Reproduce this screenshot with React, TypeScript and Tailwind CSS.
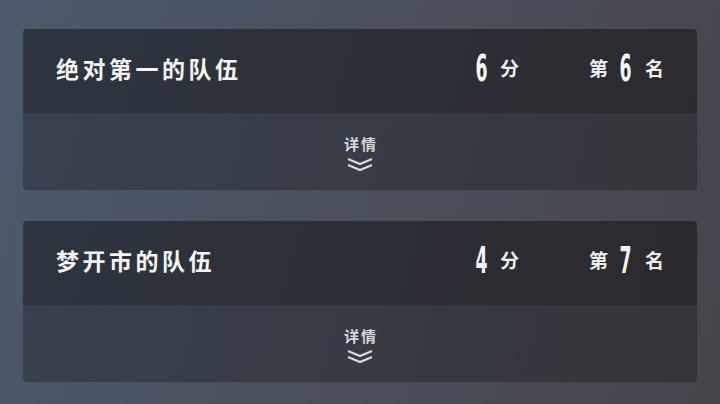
import React from "react";

const cjk = { fontFamily: '"Noto Sans CJK SC", "Noto Sans", sans-serif' };
const num = { fontFamily: '"Liberation Sans Narrow", "DejaVu Sans Condensed", "Liberation Sans", sans-serif' };

function Digit({ v }: { v: string }) {
  return (
    <span className="inline-flex w-[11px] justify-center overflow-visible">
      <span
        className="inline-block scale-x-[0.52] text-[37px] font-bold leading-none text-[#f4f4f4]"
        style={num}
      >
        {v}
      </span>
    </span>
  );
}

function Chevrons() {
  return (
    <svg width="28" height="16" viewBox="0 0 28 16" fill="none">
      <path d="M2 2 L14 7 L26 2" stroke="#d9d9d9" strokeWidth="2.4" strokeLinejoin="miter" />
      <path d="M2 8 L14 13 L26 8" stroke="#d9d9d9" strokeWidth="2.4" strokeLinejoin="miter" />
    </svg>
  );
}

function Card({ name, score, rank }: { name: string; score: string; rank: string }) {
  return (
    <div className="overflow-hidden rounded-[4px]">
      <div className="flex h-[84px] items-center bg-black/40 pb-[6px] pl-[33px] pr-[33px]">
        <div className="flex-1 text-[23px] font-bold tracking-[3.5px] text-[#f5f5f5]" style={cjk}>
          {name}
        </div>
        <div className="flex items-center">
          <Digit v={score} />
          <span className="ml-[13px] text-[19px] font-bold text-[#eeeeee]" style={cjk}>
            分
          </span>
        </div>
        <div className="ml-[70px] flex items-center">
          <span className="text-[19px] font-bold text-[#eeeeee]" style={cjk}>
            第
          </span>
          <span className="ml-[12px]">
            <Digit v={rank} />
          </span>
          <span className="ml-[14px] text-[19px] font-bold text-[#eeeeee]" style={cjk}>
            名
          </span>
        </div>
      </div>
      <div className="flex h-[77px] flex-col items-center bg-black/25 pt-[21px]">
        <div className="pl-[2px] text-[15px] font-bold leading-[20px] tracking-[2px] text-[#d6d6d6]" style={cjk}>
          详情
        </div>
        <div className="mt-[3px]">
          <Chevrons />
        </div>
      </div>
    </div>
  );
}

export default function App() {
  return (
    <div className="h-[404px] w-[720px] overflow-hidden bg-[linear-gradient(105deg,#4c5a6b,#4a4f5a_55%,#47444b)] px-[23px] pt-[29px]">
      <div className="flex flex-col gap-[31px]">
        <Card name="绝对第一的队伍" score="6" rank="6" />
        <Card name="梦开市的队伍" score="4" rank="7" />
      </div>
    </div>
  );
}
